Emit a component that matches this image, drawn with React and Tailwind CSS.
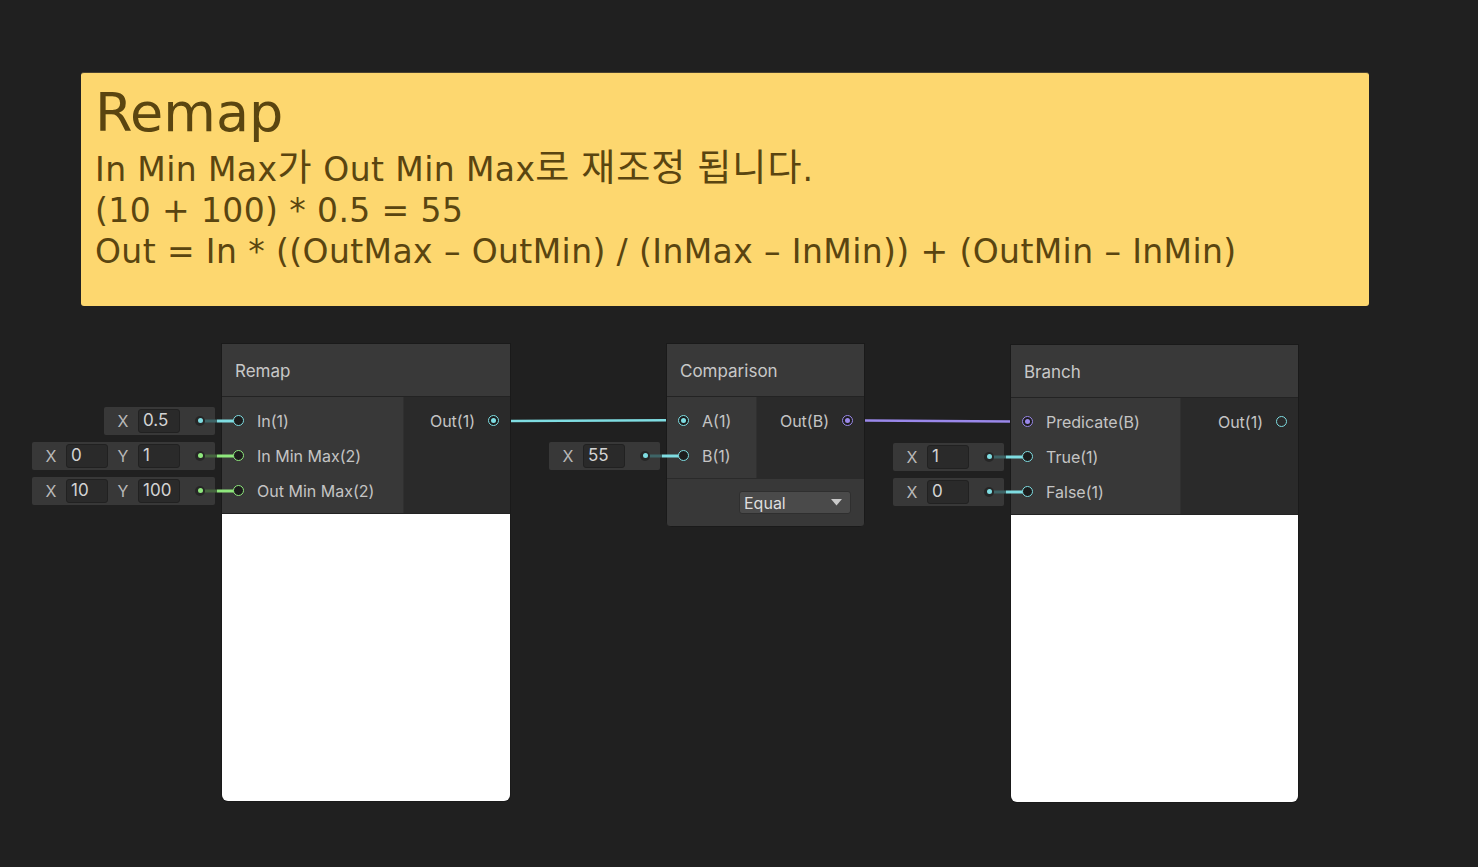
import React from 'react';

// wire / port colours per slot type
const TYPES = {
  float: { ring: 'border-[#7fdde2]', bg: 'bg-[#7fdde2]', dim: 'bg-[#3e6466]' },
  vec2: { ring: 'border-[#8fe87d]', bg: 'bg-[#8fe87d]', dim: 'bg-[#46653f]' },
  bool: { ring: 'border-[#9a88ea]', bg: 'bg-[#9a88ea]', dim: 'bg-[#4a4470]' },
};

const Port = ({ type, connected, dark = true }) => {
  const t = TYPES[type];
  return (
    <span
      className={`relative z-10 flex h-[11px] w-[11px] shrink-0 items-center justify-center rounded-full border-[1.5px] ${t.ring} ${dark ? 'bg-[#1c1c1c]' : 'bg-[#2a2a2a]'}`}
    >
      {connected && <span className={`h-[5px] w-[5px] rounded-full ${t.bg}`} />}
    </span>
  );
};

const InlineValue = ({ type, fields }) => {
  const t = TYPES[type];
  return (
    <div className="absolute right-[calc(100%+7px)] top-1/2 flex h-[28px] -translate-y-1/2 items-center rounded-[2px] bg-[#383838] pl-[4px]">
      {fields.map((f) => (
        <React.Fragment key={f.axis}>
          <span className="w-[30px] text-center text-[16px] text-[#b9b9b9]">{f.axis}</span>
          <span className="flex h-[24px] w-[42px] items-center rounded-[3px] border border-[#212121] bg-[#2a2a2a] pl-[4px] text-[17px] text-[#d4d4d4]">
            {f.value}
          </span>
        </React.Fragment>
      ))}
      <span className="relative flex h-full w-[35px] items-center justify-end pr-[10px]">
        <span className={`absolute right-[-2px] top-1/2 h-[3px] w-[14px] -translate-y-1/2 ${t.dim}`} />
        <span className="relative flex h-[10px] w-[10px] items-center justify-center rounded-full bg-[#262626]">
          <span className={`h-[5px] w-[5px] rounded-full ${t.bg}`} />
        </span>
      </span>
    </div>
  );
};

const InputRow = ({ label, type, connected, inline }) => {
  const t = TYPES[type];
  return (
    <div className="relative flex h-[35px] items-center pl-[11px]">
      {inline && (
        <>
          <InlineValue type={type} fields={inline} />
          <span className={`absolute left-[-5px] top-1/2 h-[3px] w-[17px] -translate-y-1/2 ${t.bg}`} />
        </>
      )}
      <Port type={type} connected={connected} />
      <span className="ml-[13px] whitespace-nowrap text-[16px] text-[#c4c4c4]">{label}</span>
    </div>
  );
};

const OutputRow = ({ label, type, connected }) => (
  <div className="flex h-[35px] items-center justify-end pr-[11px]">
    <span className="whitespace-nowrap text-[16px] text-[#c4c4c4]">{label}</span>
    <span className="ml-[13px]">
      <Port type={type} connected={connected} dark={connected} />
    </span>
  </div>
);

const Node = ({ className, title, inputWidth, inputs, outputs, footer, preview }) => (
  <div className={`absolute flex flex-col rounded-b-[6px] shadow-[0_0_0_1px_#1a1a1a] font-['Inter',sans-serif] ${className}`}>
    <div className="flex h-[53px] items-center border-b border-[#232323] bg-[#393939] px-[13px] pt-[3px] text-[17px] text-[#c8c8c8]">
      {title}
    </div>
    <div className="flex">
      <div className={`bg-[#383838] pb-[5px] pt-[6px] ${inputWidth}`}>
        {inputs.map((i) => (
          <InputRow key={i.label} {...i} />
        ))}
      </div>
      <div className="flex-1 border-l border-[#303030] bg-[#2a2a2a] pt-[6px]">
        {outputs.map((o) => (
          <OutputRow key={o.label} {...o} />
        ))}
      </div>
    </div>
    {footer}
    {preview && <div className="h-[288px] rounded-b-[6px] border-t border-[#232323] bg-white" />}
  </div>
);

const Ko = ({ children }) => <span className="text-[37px] leading-[0] tracking-[1px]">{children}</span>;

const StickyNote = () => (
  <div className="absolute left-[81px] top-[72px] h-[234px] w-[1288px] rounded-[3px] border-t border-[#4a4230] bg-[#fdd76f] pl-[14px] pt-[13px] font-['DejaVu_Sans','Noto_Sans_CJK_KR',sans-serif] text-[#5a4510]">
    <div className="text-[54px] leading-[54px]">Remap</div>
    <div className="mt-[9px] text-[33px] leading-[41px] tracking-[0.4px]">
      <div>
        In Min Max<Ko>가</Ko> Out Min Max<Ko>로</Ko> <Ko>재조정</Ko> <Ko>됩니다</Ko>.
      </div>
      <div>(10 + 100) * 0.5 = 55</div>
      <div>Out = In * ((OutMax – OutMin) / (InMax – InMin)) + (OutMin – InMin)</div>
    </div>
  </div>
);

const Wires = () => (
  <svg className="pointer-events-none absolute left-0 top-0" width="1478" height="867">
    {/* Remap.Out -> Comparison.A */}
    <line x1="498" y1="421.2" x2="511" y2="421.1" stroke="#3e6466" strokeWidth="2.5" />
    <line x1="511" y1="421.1" x2="667" y2="420.2" stroke="#7fdde2" strokeWidth="2.5" />
    <line x1="667" y1="420.2" x2="679" y2="420.1" stroke="#3e6466" strokeWidth="2.5" />
    {/* Comparison.Out -> Branch.Predicate */}
    <line x1="852" y1="420.5" x2="865" y2="420.6" stroke="#4a4470" strokeWidth="2.5" />
    <line x1="865" y1="420.6" x2="1011" y2="421.6" stroke="#9a88ea" strokeWidth="2.5" />
    <line x1="1011" y1="421.6" x2="1023" y2="421.7" stroke="#4a4470" strokeWidth="2.5" />
  </svg>
);

export default function App() {
  return (
    <div className="relative h-[867px] w-full overflow-hidden bg-[#202020]">
      <StickyNote />
      <Wires />

      <Node
        className="left-[222px] top-[344px] w-[288px]"
        title="Remap"
        inputWidth="w-[181px]"
        preview
        inputs={[
          { label: 'In(1)', type: 'float', inline: [{ axis: 'X', value: '0.5' }] },
          { label: 'In Min Max(2)', type: 'vec2', inline: [{ axis: 'X', value: '0' }, { axis: 'Y', value: '1' }] },
          { label: 'Out Min Max(2)', type: 'vec2', inline: [{ axis: 'X', value: '10' }, { axis: 'Y', value: '100' }] },
        ]}
        outputs={[{ label: 'Out(1)', type: 'float', connected: true }]}
      />

      <Node
        className="left-[667px] top-[344px] w-[197px]"
        title="Comparison"
        inputWidth="w-[89px]"
        inputs={[
          { label: 'A(1)', type: 'float', connected: true },
          { label: 'B(1)', type: 'float', inline: [{ axis: 'X', value: '55' }] },
        ]}
        outputs={[{ label: 'Out(B)', type: 'bool', connected: true }]}
        footer={
          <div className="flex h-[48px] items-center justify-end rounded-b-[3px] border-t border-[#2a2a2a] bg-[#383838] pr-[13px]">
            <div className="flex h-[23px] w-[112px] items-center justify-between rounded-[3px] border border-[#2f2f2f] bg-[#4a4a4a] pl-[4px] pr-[8px]">
              <span className="text-[16px] text-[#dedede]">Equal</span>
              <svg width="11" height="7" viewBox="0 0 11 7">
                <path d="M0 0 L11 0 L5.5 6.5 Z" fill="#c9c9c9" />
              </svg>
            </div>
          </div>
        }
      />

      <Node
        className="left-[1011px] top-[345px] w-[287px]"
        title="Branch"
        inputWidth="w-[169px]"
        preview
        inputs={[
          { label: 'Predicate(B)', type: 'bool', connected: true },
          { label: 'True(1)', type: 'float', inline: [{ axis: 'X', value: '1' }] },
          { label: 'False(1)', type: 'float', inline: [{ axis: 'X', value: '0' }] },
        ]}
        outputs={[{ label: 'Out(1)', type: 'float', connected: false }]}
      />
    </div>
  );
}
